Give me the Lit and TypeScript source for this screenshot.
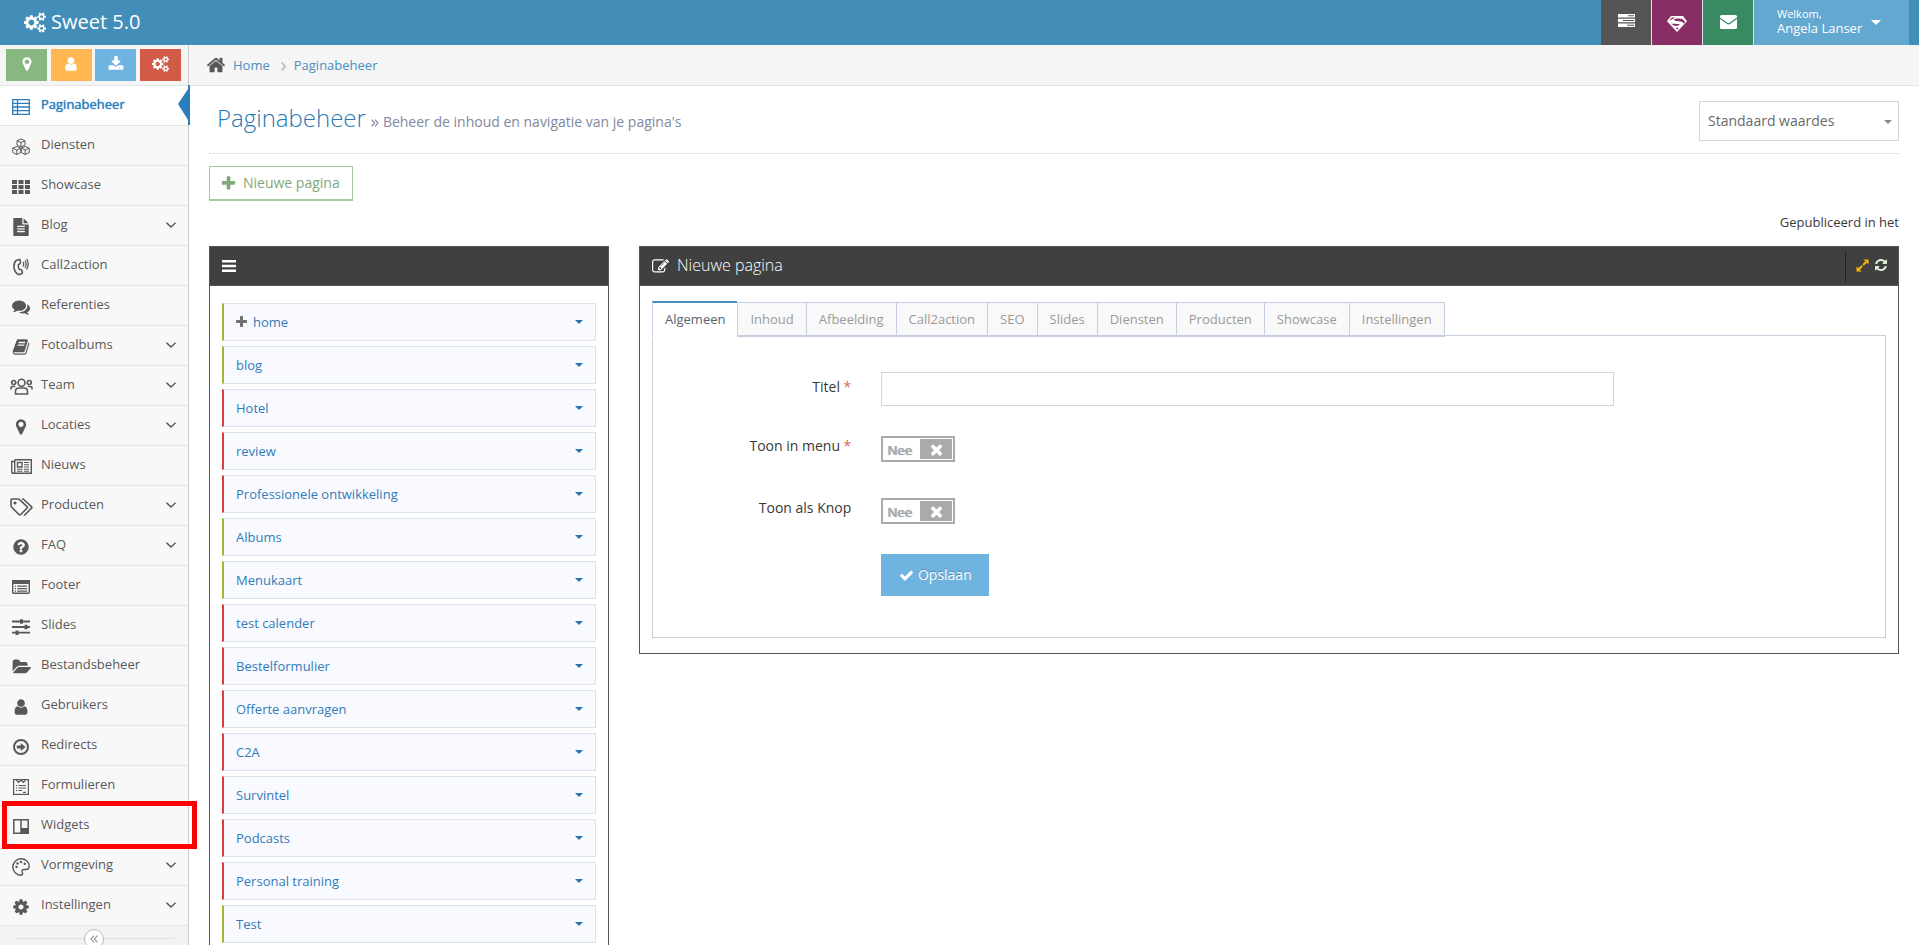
import { LitElement, html, css, svg, nothing, TemplateResult } from "lit";
import { customElement, property } from "lit/decorators.js";
import { classMap } from "lit/directives/class-map.js";

type Icon = { box: string; w: number; h: number; body: TemplateResult };

const glyph = (d: string, size = 18, box = "0 0 1792 1792", w = size): Icon => ({
  box,
  w,
  h: size,
  body: svg`<path fill="currentColor" d=${d}></path>`,
});
const art = (w: number, h: number, body: TemplateResult): Icon => ({ box: `0 0 ${w} ${h}`, w, h, body });

const MARKER = "M1152 640q0-106-75-181t-181-75-181 75-75 181 75 181 181 75 181-75 75-181zm256 0q0 109-33 179l-364 774q-16 33-47.5 52t-67.5 19-67.5-19-46.5-52l-365-774q-33-70-33-179 0-212 150-362t362-150 362 150 150 362z";
const USER = "M1536 1399q0 109-62.5 187t-150.5 78h-854q-88 0-150.5-78t-62.5-187q0-85 8.5-160.5t31.5-152 58.5-131 94-89 134.5-34.5q131 128 313 128t313-128q76 0 134.5 34.5t94 89 58.5 131 31.5 152 8.5 160.5zm-256-887q0 159-112.5 271.5t-271.5 112.5-271.5-112.5-112.5-271.5 112.5-271.5 271.5-112.5 271.5 112.5 112.5 271.5z";
const DOWNLOAD = "M1344 1344q0-26-19-45t-45-19-45 19-19 45 19 45 45 19 45-19 19-45zm256 0q0-26-19-45t-45-19-45 19-19 45 19 45 45 19 45-19 19-45zm128-224v320q0 40-28 68t-68 28h-1472q-40 0-68-28t-28-68v-320q0-40 28-68t68-28h465l135 136q58 56 136 56t136-56l136-136h464q40 0 68 28t28 68zm-325-569q17 41-14 70l-448 448q-18 19-45 19t-45-19l-448-448q-31-29-14-70 17-39 59-39h256v-448q0-26 19-45t45-19h256q26 0 45 19t19 45v448h256q42 0 59 39z";
const COG = "M1152 896q0-106-75-181t-181-75-181 75-75 181 75 181 181 75 181-75 75-181zm512-109v222q0 12-8 23t-20 13l-185 28q-19 54-39 91 35 50 107 138 10 12 10 25t-9 23q-27 37-99 108t-94 71q-12 0-26-9l-138-108q-44 23-91 38-16 136-29 186-7 28-36 28h-222q-14 0-24.5-8.5t-11.5-21.5l-28-184q-49-16-90-37l-141 107q-10 9-25 9-14 0-25-11-126-114-165-168-7-10-7-23 0-12 8-23 15-21 51-66.5t54-70.5q-27-50-41-99l-183-27q-13-2-21-12.5t-8-23.5v-222q0-12 8-23t19-13l186-28q14-46 39-92-40-57-107-138-10-12-10-24 0-10 9-23 26-36 98.5-107.5t94.5-71.5q13 0 26 10l138 107q44-23 91-38 16-136 29-186 7-28 36-28h222q14 0 24.5 8.5t11.5 21.5l28 184q49 16 90 37l142-107q9-9 24-9 13 0 25 10 129 119 165 170 7 8 7 22 0 12-8 23-15 21-51 66.5t-54 70.5q26 50 41 98l183 28q13 2 21 12.5t8 23.5z";
const COGS = "M832 896q0-106-75-181t-181-75-181 75-75 181 75 181 181 75 181-75 75-181zm768 512q0-52-38-90t-90-38-90 38-38 90q0 53 37.5 90.5t90.5 37.5 90.5-37.5 37.5-90.5zm0-1024q0-52-38-90t-90-38-90 38-38 90q0 53 37.5 90.5t90.5 37.5 90.5-37.5 37.5-90.5zm-384 421v185q0 10-7 19.5t-16 10.5l-155 24q-11 35-32 76 34 48 90 115 7 11 7 20 0 12-7 19-23 30-82.5 89.5t-78.5 59.5q-11 0-21-7l-115-90q-37 19-77 31-11 108-23 155-7 24-30 24h-186q-11 0-20-7.5t-10-17.5l-23-153q-34-10-75-31l-118 89q-7 7-20 7-11 0-21-8-144-133-144-160 0-9 7-19 10-14 41-53t47-61q-23-44-35-82l-152-24q-10-1-17-9.5t-7-19.5v-185q0-10 7-19.5t16-10.5l155-24q11-35 32-76-34-48-90-115-7-11-7-20 0-12 7-20 22-30 82-89t79-59q11 0 21 7l115 90q34-18 77-32 11-108 23-154 7-24 30-24h186q11 0 20 7.5t10 17.5l23 153q34 10 75 31l118-89q8-7 20-7 11 0 21 8 144 133 144 160 0 8-7 19-12 16-42 54t-45 60q23 48 34 82l152 23q10 2 17 10.5t7 19.5zm640 533v140q0 16-149 31-12 27-30 52 51 113 51 138 0 4-4 7-122 71-124 71-8 0-46-47t-52-68q-20 2-30 2t-30-2q-14 21-52 68t-46 47q-2 0-124-71-4-3-4-7 0-25 51-138-18-25-30-52-149-15-149-31v-140q0-16 149-31 13-29 30-52-51-113-51-138 0-4 4-7 4-2 35-20t59-34 30-16q8 0 46 46.5t52 67.5q20-2 30-2t30 2q51-71 92-112l6-2q4 0 124 70 4 3 4 7 0 25-51 138 17 23 30 52 149 15 149 31zm0-1024v140q0 16-149 31-12 27-30 52 51 113 51 138 0 4-4 7-122 71-124 71-8 0-46-47t-52-68q-20 2-30 2t-30-2q-14 21-52 68t-46 47q-2 0-124-71-4-3-4-7 0-25 51-138-18-25-30-52-149-15-149-31v-140q0-16 149-31 13-29 30-52-51-113-51-138 0-4 4-7 4-2 35-20t59-34 30-16q8 0 46 46.5t52 67.5q20-2 30-2t30 2q51-71 92-112l6-2q4 0 124 70 4 3 4 7 0 25-51 138 17 23 30 52 149 15 149 31z";
const PLUS = "M1600 736v192q0 40-28 68t-68 28h-416v416q0 40-28 68t-68 28h-192q-40 0-68-28t-28-68v-416h-416q-40 0-68-28t-28-68v-192q0-40 28-68t68-28h416v-416q0-40 28-68t68-28h192q40 0 68 28t28 68v416h416q40 0 68 28t28 68z";
const FILE = "M1596 476q14 14 28 36h-472v-472q22 14 36 28zm-476 164h544v1056q0 40-28 68t-68 28h-1344q-40 0-68-28t-28-68v-1600q0-40 28-68t68-28h800v544q0 40 28 68t68 28zm160 736v-64q0-14-9-23t-23-9h-704q-14 0-23 9t-9 23v64q0 14 9 23t23 9h704q14 0 23-9t9-23zm0-256v-64q0-14-9-23t-23-9h-704q-14 0-23 9t-9 23v64q0 14 9 23t23 9h704q14 0 23-9t9-23zm0-256v-64q0-14-9-23t-23-9h-704q-14 0-23 9t-9 23v64q0 14 9 23t23 9h704q14 0 23-9t9-23z";
const COMMENTS = "M1408 768q0 139-94 257t-256.5 186.5-353.5 68.5q-86 0-176-16-124 88-278 128-36 9-86 16h-3q-11 0-20.5-8t-11.5-21q-1-3-1-6.5t.5-6.5 2-6l2.5-5 3.5-5.5 4-5 4.5-5 4-4.5q5-6 23-25t26-29.5 22.5-29 25-38.5 20.5-44q-124-72-195-177t-71-224q0-139 94-257t256.5-186.5 353.5-68.5 353.5 68.5 256.5 186.5 94 257zm384 256q0 120-71 224.5t-195 176.5q10 24 20.5 44t25 38.5 22.5 29 26 29.5 23 25q1 1 4 4.5t4.5 5 4 5 3.5 5.5l2.5 5 2 6 .5 6.5-1 6.5q-3 14-13 22t-22 7q-50-7-86-16-154-40-278-128-90 16-176 16-271 0-472-132 58 4 88 4 161 0 309-45t264-129q125-92 192-212t67-254q0-77-23-152 129 71 204 178t75 230z";
const BOOK = "M1703 478q40 57 18 129l-275 906q-19 64-76.5 107.5t-122.5 43.5h-923q-77 0-148.5-53.5t-99.5-131.5q-24-67-2-127 0-4 3-27t4-37q1-8-3-21.5t-3-19.5q2-11 8-21t16.5-23.5 16.5-23.5q23-38 45-91.5t30-91.5q3-10 .5-30t-.5-28q3-11 17-28t17-23q21-36 42-92t25-90q1-9-2.5-32t.5-28q4-13 22-30.5t22-22.5q19-26 42.5-84.5t27.5-96.5q1-8-3-25.5t-2-26.5q2-8 9-18t18-23 17-21q8-12 16.5-30.5t15-35 16-36 19.5-32 26.5-23.5 36-11.5 47.5 5.5l-1 3q38-9 51-9h761q74 0 114 56t18 130l-274 906q-36 119-71.5 153.5t-128.5 34.5h-869q-27 0-38 15-11 16-1 43 24 70 144 70h923q29 0 56-15.5t35-41.5l300-987q7-22 5-57 38 15 59 43zm-1064 2q-4 13 2 22.5t20 9.5h608q13 0 25.5-9.5t16.5-22.5l21-64q4-13-2-22.5t-20-9.5h-608q-13 0-25.5 9.5t-16.5 22.5zm-83 256q-4 13 2 22.5t20 9.5h608q13 0 25.5-9.5t16.5-22.5l21-64q4-13-2-22.5t-20-9.5h-608q-13 0-25.5 9.5t-16.5 22.5z";
const QUESTION = "M1024 1376v-192q0-14-9-23t-23-9h-192q-14 0-23 9t-9 23v192q0 14 9 23t23 9h192q14 0 23-9t9-23zm256-672q0-88-55.5-163t-138.5-116-170-41q-243 0-371 213-15 24 8 42l132 100q7 6 19 6 16 0 25-12 53-68 86-92 34-24 86-24 48 0 85.5 26t37.5 59q0 38-20 61t-68 45q-63 28-115.5 86.5t-52.5 125.5v36q0 14 9 23t23 9h192q14 0 23-9t9-23q0-19 21.5-49.5t54.5-49.5q32-18 49-28.5t46-35 44.5-48 28-60.5 12.5-81zm384 192q0 209-103 385.5t-279.5 279.5-385.5 103-385.5-103-279.5-279.5-103-385.5 103-385.5 279.5-279.5 385.5-103 385.5 103 279.5 279.5 103 385.5z";
const FOLDER = "M1943 952q0 31-31 66l-336 396q-43 51-120.5 86.5t-143.5 35.5h-1088q-34 0-60.5-13t-26.5-43q0-31 31-66l336-396q43-51 120.5-86.5t143.5-35.5h1088q34 0 60.5 13t26.5 43zm-343-344v160h-832q-94 0-197 47.5t-164 119.5l-337 396-5 6q0-4-.5-12.5t-.5-12.5v-960q0-92 66-158t158-66h320q92 0 158 66t66 158v32h544q92 0 158 66t66 158z";
const HOME = "M1472 992v480q0 26-19 45t-45 19h-384v-384h-256v384h-384q-26 0-45-19t-19-45v-480q0-1 .5-3t.5-3l575-474 575 474q1 2 1 6zm223-69l-62 74q-8 9-21 11h-3q-13 0-21-7l-692-577-692 577q-12 8-24 7-13-2-21-11l-62-74q-8-10-7-23.5t11-21.5l719-599q32-26 76-26t76 26l244 204v-195q0-14 9-23t23-9h192q14 0 23 9t9 23v408l219 182q10 8 11 21.5t-7 23.5z";
const CHECK = "M1671 566q0 40-28 68l-724 724-136 136q-28 28-68 28t-68-28l-136-136-362-362q-28-28-28-68t28-68l136-136q28-28 68-28t68 28l294 295 656-657q28-28 68-28t68 28l136 136q28 28 28 68z";
const TIMES = "M1490 1322q0 40-28 68l-136 136q-28 28-68 28t-68-28l-294-294-294 294q-28 28-68 28t-68-28l-136-136q-28-28-28-68t28-68l294-294-294-294q-28-28-28-68t28-68l136-136q28-28 68-28t68 28l294 294 294-294q28-28 68-28t68 28l136 136q28 28 28 68t-28 68l-294 294 294 294q28 28 28 68z";
const REFRESH = "M1639 1056q0 5-1 7-64 268-268 434.5t-478 166.5q-146 0-282.5-55t-243.5-157l-129 129q-19 19-45 19t-45-19-19-45v-448q0-26 19-45t45-19h448q26 0 45 19t19 45-19 45l-137 137q71 66 161 102t187 36q134 0 250-65t186-179q11-17 53-117 8-23 30-23h192q13 0 22.5 9.5t9.5 22.5zm25-800v448q0 26-19 45t-45 19h-448q-26 0-45-19t-19-45 19-45l138-138q-148-137-349-137-134 0-250 65t-186 179q-11 17-53 117-8 23-30 23h-199q-13 0-22.5-9.5t-9.5-22.5v-7q65-268 270-434.5t480-166.5q146 0 284 55.5t245 156.5l130-129q19-19 45-19t45 19 19 45z";
const EDIT = "M888 1184l116-116-152-152-116 116v56h96v96h56zm440-720q-16-16-33 1l-350 350q-17 17-1 33t33-1l350-350q17-17 1-33zm80 594v190q0 119-84.5 203.5t-203.5 84.5h-832q-119 0-203.5-84.5t-84.5-203.5v-832q0-119 84.5-203.5t203.5-84.5h832q63 0 117 25 15 7 18 23 3 17-9 29l-49 49q-14 14-32 8-23-6-45-6h-832q-66 0-113 47t-47 113v832q0 66 47 113t113 47h832q66 0 113-47t47-113v-126q0-13 9-22l64-64q15-15 35-7t20 29zm-96-738l288 288-672 672h-288v-288zm444 132l-92 92-288-288 92-92q28-28 68-28t68 28l152 152q28 28 28 68t-28 68z";

const cube = (x: number, y: number) => svg`<path fill="none" stroke="currentColor" stroke-width="1" stroke-linejoin="round"
  d=${`M${x} ${y + 2}l4-1.7 4 1.7v4.3l-4 2-4-2zM${x} ${y + 2}l4 1.8 4-1.8M${x + 4} ${y + 3.8}v4.5`}></path>`;

const ICONS: Record<string, Icon> = {
  marker: glyph(MARKER),
  markerSmall: glyph(MARKER, 16),
  userSmall: glyph(USER, 16),
  user: glyph(USER),
  download: glyph(DOWNLOAD, 16),
  cog: glyph(COG),
  brand: glyph(COGS, 21, "-64 0 1920 1792", 22),
  cogs: glyph(COGS, 16, "-64 0 1920 1792", 17),
  plus: glyph(PLUS, 17),
  plusSmall: glyph(PLUS, 14, "192 0 1408 1792", 11),
  file: glyph(FILE),
  comments: glyph(COMMENTS),
  book: glyph(BOOK),
  question: glyph(QUESTION),
  folder: glyph(FOLDER, 18, "0 0 1943 1792", 19),
  home: glyph(HOME, 20),
  check: glyph(CHECK, 15),
  times: glyph(TIMES, 17),
  refresh: glyph(REFRESH, 14),
  edit: glyph(EDIT, 17),
  table: art(18, 16, svg`<path fill="none" stroke="currentColor" stroke-width="1.3" d="M.7.7h16.6v14.6H.7zM.7 4.4h16.6M.7 8h16.6M.7 11.7h16.6M5.5.7v14.6"></path>`),
  cubes: art(18, 18, svg`${cube(5, 0.7)}${cube(0.8, 8.2)}${cube(9.2, 8.2)}`),
  grid: art(18, 14, svg`<path fill="currentColor" d="M0 0h5v4H0zM6.500 0h5v4h-5zM13 0h5v4h-5zM0 5h5v4H0zM6.500 5h5v4h-5zM13 5h5v4h-5zM0 10h5v4H0zM6.500 10h5v4h-5zM13 10h5v4h-5z"></path>`),
  phone: art(16, 18, svg`<path fill="none" stroke="currentColor" stroke-width="1.600" stroke-linejoin="round" d="M3.200 2.400 6 1.500c.7-.1 1.100.3 1.200 1l.2 2.200c0 .8-.7 1.300-2 1.700-.5 2-.2 3.600.8 5.100 1.300-.2 2.100 0 2.400.6l.8 1.800c.3.700 0 1.200-.6 1.600l-2.200 1.100C3.900 16.300.9 13 .9 8.700.9 6 1.700 3.700 3.200 2.400z"></path><path fill="none" stroke="currentColor" stroke-width="1.300" d="M10 4q1.500 1.800 0 4.500M12 2.500q2.400 3.500 0 7.500M13.700 1q3 5 0 10.500"></path>`),
  team: art(23, 17, svg`<g fill="none" stroke="currentColor" stroke-width="1.600"><circle cx="11.500" cy="4.700" r="3.500"></circle><path d="M5.500 16V13.500q0-3.500 3.500-3.500h5q3.500 0 3.500 3.500V16z"></path><circle cx="3.700" cy="4.500" r="2"></circle><circle cx="19.300" cy="4.500" r="2"></circle><path d="M1 11.500V10q0-1.500 1.600-1.500h2.700M22 11.500V10q0-1.500-1.600-1.500h-2.700"></path></g>`),
  news: art(21, 15, svg`<path fill="none" stroke="currentColor" stroke-width="1.400" d="M3.700.7h16.600v13.600H2.200Q.7 14.300.7 12.800V2.500h3M3.700.7v12q0 1.600-1.500 1.600"></path><path fill="none" stroke="currentColor" stroke-width="1.400" d="M6.500 3.500h4.500v4.500h-4.500z"></path><path stroke="currentColor" stroke-width="1.100" d="M13 3.500h5M13 5.700h5M13 8h5M6 10.200h5.500M13 10.200h5M6 12.200h5.500M13 12.200h5"></path>`),
  tags: art(23, 18, svg`<g fill="none" stroke="currentColor" stroke-width="1.600" stroke-linejoin="round"><path d="M1 1.800Q1 1 1.800 1H8q1 0 1.800.8L17 8.600q.8.800 0 1.600L10.700 16.500q-.9.900-1.800 0L1.800 9.300Q1 8.500 1 7.500z"></path><path d="M12 1h1.200L21.500 8.700q.7.700 0 1.400L15 16.800q-.6.500-1.200.1"></path></g><circle cx="5" cy="5" r="1.600" fill="currentColor"></circle>`),
  list: art(18, 14, svg`<rect x=".7" y=".7" width="16.600" height="12.600" rx="1" fill="none" stroke="currentColor" stroke-width="1.400"></rect><path fill="currentColor" d="M0 0h18v4H0z"></path><path stroke="currentColor" stroke-width="1.200" d="M2.800 6.200H4M5.200 6.200h10M2.800 8.700H4M5.200 8.700h10M2.800 11.200H4M5.200 11.200h10"></path>`),
  sliders: art(18, 16, svg`<path stroke="currentColor" stroke-width="1.800" d="M0 2.500h18M0 8h18M0 13.700h18"></path><path fill="currentColor" d="M8 .3h3v4.500H8zM12.500 5.800h3v4.500h-3zM3.500 11.500h3V16h-3z"></path>`),
  arrow: art(16, 16, svg`<circle cx="8" cy="8" r="7" fill="none" stroke="currentColor" stroke-width="2"></circle><path fill="currentColor" d="M3.800 6.600h4V3.900L12.600 8l-4.800 4.100V9.400h-4z"></path>`),
  form: art(16, 16, svg`<rect x=".6" y=".6" width="14.800" height="14.800" fill="none" stroke="currentColor" stroke-width="1.200"></rect><path fill="none" stroke="currentColor" stroke-width="1.200" d="M3.500 1l2 2.300L8 1.300l2.500 2 2-2.300M3 6.500h1.300M5.500 6.500H13M3 9h1.300M5.500 9H13M3 11.500h1.300M5.500 11.500H9M10 13.300h3"></path>`),
  widgets: art(16, 15, svg`<path fill="none" stroke="currentColor" stroke-width="1.500" d="M.8.8h14.400v13.400H.8zM8 .8v13.400"></path><path fill="currentColor" d="M8 9h8v6H8z"></path>`),
  palette: art(18, 18, svg`<path fill="none" stroke="currentColor" stroke-width="1.400" d="M9 .8C13.600.8 17.200 4.200 17.200 8c0 2.300-1.400 3.500-3.300 3.500h-2.200c-1.500 0-2.200 1.300-1.500 2.500.6 1.100.7 3.200-1.200 3.200C4.400 17.200.8 13.600.8 9 .8 4.400 4.400.8 9 .8z"></path><g fill="currentColor"><circle cx="4.500" cy="9" r="1.200"></circle><circle cx="5.500" cy="5.500" r="1.200"></circle><circle cx="9" cy="4" r="1.200"></circle><circle cx="12.800" cy="5.800" r="1.200"></circle></g>`),
  tasks: art(17, 13, svg`<path fill="currentColor" d="M0 0h17v3.500H0zM0 4.800h17v3.400H0zM0 9.500h17V13H0z"></path><path fill="#555" d="M10 1.300h6v1h-6zM5 6h11v1H5zM9 10.800h7v1H9z"></path>`),
  hero: art(20, 16, svg`<path fill="currentColor" d="M4 0h12l4 5.300L10 16 0 5.300z"></path><path fill="#892e65" d="M4.800 1.600h3.600L3 4.500 2 5.200zM16 3.400c-2.500-1.400-9-1.300-9 .6 0 1.700 9.800.4 9.800 3.900l1.300-2zM4.300 7.500c3 .6 7.200.2 8.300 1 .6.900-3 1.600-6 1zM8.600 11.700h3.200L10 13.800z"></path>`),
  mail: art(17, 14, svg`<rect width="17" height="14" rx="1.500" fill="currentColor"></rect><path fill="none" stroke="#398a63" stroke-width="1.200" d="M0 3.200l7 5.100q1.500 1.200 3 0l7-5.100"></path>`),
  menu: art(14, 12, svg`<path fill="currentColor" d="M0 0h14v2.500H0zM0 4.800h14v2.400H0zM0 9.500h14V12H0z"></path>`),
  expand: art(13, 13, svg`<path fill="currentColor" d="M7.500.5h5v5l-1.700-1.700-3 3-1.400-1.500 3-3zM5.500 6.300l1.300 1.400-3 3 1.700 1.800h-5v-5l1.800 1.700z"></path>`),
  chevron: art(10, 6, svg`<path fill="none" stroke="currentColor" stroke-width="1.500" d="M.5.700 5 5 9.500.700"></path>`),
  right: art(5, 9, svg`<path fill="none" stroke="currentColor" stroke-width="1.500" d="M.6.600 4.200 4.500.600 8.400"></path>`),
  doubleRight: art(8, 8, svg`<path fill="none" stroke="currentColor" stroke-width="1.200" d="M.6.600 3.600 4 .6 7.400M4 .6 7 4 4 7.400"></path>`),
  doubleLeft: art(8, 8, svg`<path fill="none" stroke="currentColor" stroke-width="1.200" d="M4 .6 1 4l3 3.400M7.400.6l-3 3.400 3 3.400"></path>`),
  caret: art(8, 4, svg`<path fill="currentColor" d="M0 0h8L4 4z"></path>`),
  caretWide: art(10, 5, svg`<path fill="currentColor" d="M0 0h10L5 5z"></path>`),
};

@customElement("ui-icon")
class UiIcon extends LitElement {
  static styles = css`
    :host { display: inline-flex; flex: none; }
    svg { display: block; }
  `;
  @property() name = "";
  render() {
    const i = ICONS[this.name];
    return i
      ? html`<svg viewBox=${i.box} width=${i.w} height=${i.h} aria-hidden="true">${i.body}</svg>`
      : nothing;
  }
}

const NAV: { label: string; icon: string; sub?: boolean; active?: boolean; marked?: boolean }[] = [
  { label: "Paginabeheer", icon: "table", active: true },
  { label: "Diensten", icon: "cubes" },
  { label: "Showcase", icon: "grid" },
  { label: "Blog", icon: "file", sub: true },
  { label: "Call2action", icon: "phone" },
  { label: "Referenties", icon: "comments" },
  { label: "Fotoalbums", icon: "book", sub: true },
  { label: "Team", icon: "team", sub: true },
  { label: "Locaties", icon: "marker", sub: true },
  { label: "Nieuws", icon: "news" },
  { label: "Producten", icon: "tags", sub: true },
  { label: "FAQ", icon: "question", sub: true },
  { label: "Footer", icon: "list" },
  { label: "Slides", icon: "sliders" },
  { label: "Bestandsbeheer", icon: "folder" },
  { label: "Gebruikers", icon: "user" },
  { label: "Redirects", icon: "arrow" },
  { label: "Formulieren", icon: "form" },
  { label: "Widgets", icon: "widgets", marked: true },
  { label: "Vormgeving", icon: "palette", sub: true },
  { label: "Instellingen", icon: "cog", sub: true },
];

const PAGES: { title: string; live?: boolean; children?: boolean }[] = [
  { title: "home", live: true, children: true },
  { title: "blog", live: true },
  { title: "Hotel" },
  { title: "review" },
  { title: "Professionele ontwikkeling" },
  { title: "Albums", live: true },
  { title: "Menukaart", live: true },
  { title: "test calender" },
  { title: "Bestelformulier" },
  { title: "Offerte aanvragen" },
  { title: "C2A" },
  { title: "Survintel" },
  { title: "Podcasts" },
  { title: "Personal training" },
  { title: "Test", live: true },
];

const TABS = ["Algemeen", "Inhoud", "Afbeelding", "Call2action", "SEO", "Slides", "Diensten", "Producten", "Showcase", "Instellingen"];

@customElement("app-root")
class AppRoot extends LitElement {
  static styles = css`
    :host {
      display: flex;
      flex-direction: column;
      height: 100vh;
      overflow: hidden;
      background: #fff;
      color: #393939;
      font: 13px/20px "Open Sans", "Noto Sans", sans-serif;
    }
    * { box-sizing: border-box; }
    a { color: #337ab7; text-decoration: none; }
    ul { list-style: none; margin: 0; padding: 0; }
    button, input, select { font: inherit; border-radius: 0; margin: 0; }
    button { cursor: pointer; }

    .topbar { display: flex; justify-content: space-between; flex: none; height: 45px; padding: 0 10px 0 24px; background: #438eb9; color: #fff; }
    .brand { display: flex; align-items: center; gap: 5px; padding-bottom: 1px; color: #fff; font-size: 20px; }
    .tools { display: flex; gap: 1px; }
    .tools-wrap { display: flex; background: #d9e6ee; }
    .tool { display: flex; align-items: center; justify-content: center; width: 50px; border: 0; padding: 0 0 4px; color: #fff; }
    .grey { background: #555; }
    .purple { background: #892e65; padding: 2px 0 0; }
    .green { background: #398a63; padding: 0 0 2px; }
    .account { display: flex; align-items: center; gap: 9px; width: 155px; border: 0; padding: 0 0 0 23px; background: #62a8d1; color: #fff; text-align: left; }
    .account-name { display: block; padding-bottom: 4px; line-height: 14px; }
    .welcome { display: block; font-size: 11px; }

    .shell { display: flex; flex: 1; min-height: 0; }
    .sidebar { position: relative; z-index: 1; display: flex; flex-direction: column; flex: none; width: 189px; border-right: 1px solid #ccc; background: #f2f2f2; }
    .shortcuts { display: flex; justify-content: space-between; padding: 4px 7px 4px 6px; flex: none; background: #f5f5f5; }
    .shortcut { display: flex; align-items: center; justify-content: center; width: 41px; height: 32px; border: 0; padding: 0 0 2px; color: #fff; }
    .s-green { background: #87b87f; }
    .s-orange { background: #ffb752; }
    .s-blue { background: #6fb3e0; }
    .s-red { background: #d15b47; }
    .nav-item { position: relative; border-top: 1px solid #e5e5e5; }
    .nav-link { display: flex; align-items: center; height: 39px; padding: 0 12px 0 6px; background: #f8f8f8; color: #585858; }
    .nav-icon { display: flex; justify-content: center; width: 30px; padding-top: 2px; }
    .nav-text { flex: 1; padding: 0 0 4px 5px; }
    .nav-arrow { padding-bottom: 1px; }
    .active .nav-link { background: #fff; color: #2b7dbc; }
    .active .nav-text { text-shadow: 0 0 1px #2b7dbc; }
    .active::after { content: ""; position: absolute; inset: -1px -2px 0 auto; width: 12px; background: #2b7dbc; clip-path: polygon(10px 0, 12px 0, 12px 100%, 10px 100%, 10px 35px, 0 19px, 10px 4px); }
    .marked::after { content: ""; position: absolute; inset: -5px -9px -4px 2px; border: 5px solid #f00; z-index: 2; pointer-events: none; }
    .collapse { display: flex; align-items: center; flex: none; height: 26px; padding: 0 14px; border-top: 1px solid #e5e5e5; }
    .collapse::before, .collapse::after { content: ""; flex: 1; border-top: 1px solid #e0e0e0; }
    .collapse-button { display: flex; align-items: center; justify-content: center; width: 20px; height: 20px; padding: 0; border: 1px solid #bbb; border-radius: 50%; background: #fff; color: #999; }

    .main { flex: 1; min-width: 0; }
    .crumbs { display: flex; align-items: center; height: 41px; padding: 0 17px; border-bottom: 1px solid #e5e5e5; background: #f5f5f5; color: #585858; }
    .crumbs a { color: #4c8fbd; }
    .crumbs .first { padding: 0 11px 0 7px; }
    .crumbs .last { padding-left: 8px; }
    .sep { color: #b2b6bf; padding-top: 2px; }
    .content { padding: 15px 20px; }
    .page-header { display: flex; align-items: center; justify-content: space-between; padding: 0 0 12px 8px; border-bottom: 1px dotted #ccc; }
    .heading { display: flex; align-items: baseline; gap: 5px; margin: 0; padding-bottom: 2px; color: #2679b5; font-size: 24px; line-height: 32px; font-weight: 300; }
    .subtitle { display: inline-flex; align-items: baseline; gap: 4px; color: #8089a0; font-size: 14px; font-weight: 400; }
    .picker { position: relative; width: 200px; }
    .picker select { appearance: none; width: 100%; height: 40px; padding: 0 24px 0 8px; border: 1px solid #d5d5d5; background: #fff; color: #696969; font-size: 14px; }
    .picker-caret { position: absolute; right: 7px; top: 19px; color: #888; pointer-events: none; }
    .new-page { display: flex; align-items: center; gap: 6px; margin-top: 12px; height: 35px; padding: 0 12px 0 10px; border: 1px solid #a7c9a1; border-bottom-width: 2px; background: #fff; color: #81a87b; font-size: 14px; }
    .published { margin: 11px 0 14px; text-align: right; }

    .columns { display: flex; align-items: flex-start; gap: 30px; }
    .pages { flex: none; width: calc((100% + 30px) / 4 - 30px); }
    .editor { flex: 1; min-width: 0; }
    .widget { border: 1px solid #555; background: #fff; }
    .widget-head { display: flex; align-items: center; height: 39px; padding-left: 12px; border-bottom: 1px solid #555; background: #404040; color: #fff; }
    .widget-title { flex: 1; margin: 0; padding: 0 0 3px 8px; font-size: 16px; font-weight: 300; }
    .widget-tools { display: flex; align-items: center; gap: 5px; height: 31px; padding: 0 10px; border-left: 1px solid #222; }
    .widget-tool { display: flex; padding: 0 0 2px; border: 0; background: none; }
    .amber { color: #ffb400; }
    .mint { color: #def0d8; }
    .page-list { display: flex; flex-direction: column; gap: 5px; padding: 17px 12px; }
    .page-item { display: flex; align-items: center; justify-content: space-between; height: 38px; padding: 0 12px; border: 1px solid #dae2ea; border-left: 2px solid #d53f40; background: #f8faff; color: #337ab7; }
    .page-item.live { border-left-color: #9abc32; }
    .page-name { display: flex; align-items: center; gap: 6px; margin: 0; color: #707070; }
    .page-menu { display: flex; padding: 0; border: 0; background: none; color: #2c74b4; }

    .editor-body { padding: 15px 12px; }
    .tabs { position: relative; display: flex; align-items: flex-end; margin-bottom: -2px; }
    .tab { height: 35px; padding: 0 12px; border: 1px solid #c5cfe0; border-width: 1px 0 2px 1px; background: #f9f9f9; color: #999; }
    .tab:last-child { border-right-width: 1px; }
    .tab.on { height: 36px; border-top: 2px solid #4c8fbd; border-bottom-color: #fff; background: #fff; color: #576373; }
    .pane { padding: 36px 12px 41px; border: 1px solid #c5d0dc; }
    .row { display: flex; align-items: flex-start; }
    .row-label { flex: none; width: 16.6667%; padding: 0 15px 0 0; text-align: right; font-size: 14px; }
    .tall .row-label { padding-top: 5px; }
    .req { color: #dd6a57; }
    .row-field { flex: 1; padding: 0 15px; }
    .tall { min-height: 64px; }
    .mid { min-height: 62px; }
    .short { min-height: 56px; }
    .text { display: block; width: 75%; height: 34px; padding: 0 8px; border: 1px solid #d5d5d5; }
    .toggle { position: relative; display: flex; justify-content: space-between; width: 74px; height: 26px; padding: 1px 1px 1px 4px; border: 2px solid #aaa; background: #fff; color: #aaa; line-height: 22px; cursor: pointer; }
    .toggle-text { text-shadow: 1px 0 0 #aaa, 0 0 1px #aaa; }
    .toggle input { position: absolute; inset: 0; width: 100%; height: 100%; opacity: 0; }
    .knob { display: flex; align-items: center; justify-content: center; width: 32px; background: #aaa; color: #fff; }
    .save { display: flex; align-items: center; justify-content: center; gap: 4px; width: 108px; height: 42px; padding: 0; border: 0; background: #6fb3e0; color: #fff; font-size: 14px; text-shadow: 0 -1px 0 rgba(0, 0, 0, 0.25); }
  `;

  private toggleRow(id: string, label: string, required: boolean, size: string) {
    return html`<div class="row ${size}">
      <label class="row-label" for=${id}>${label}${required ? html` <span class="req">*</span>` : nothing}</label>
      <div class="row-field">
        <div class="toggle">
          <span class="toggle-text">Nee</span><span class="knob"><ui-icon name="times"></ui-icon></span>
          <input type="checkbox" id=${id} />
        </div>
      </div>
    </div>`;
  }

  render() {
    return html`
      <header class="topbar">
        <a class="brand" href="#"><ui-icon name="brand"></ui-icon><span>Sweet 5.0</span></a>
        <div class="tools-wrap"><div class="tools">
          <button class="tool grey" aria-label="Taken"><ui-icon name="tasks"></ui-icon></button>
          <button class="tool purple" aria-label="Beheer"><ui-icon name="hero"></ui-icon></button>
          <button class="tool green" aria-label="Berichten"><ui-icon name="mail"></ui-icon></button>
          <button class="account">
            <span class="account-name"><span class="welcome">Welkom,</span>Angela Lanser</span>
            <ui-icon name="caretWide"></ui-icon>
          </button>
        </div></div>
      </header>
      <div class="shell">
        <aside class="sidebar">
          <div class="shortcuts">
            <button class="shortcut s-green" aria-label="Locaties"><ui-icon name="markerSmall"></ui-icon></button>
            <button class="shortcut s-orange" aria-label="Gebruikers"><ui-icon name="userSmall"></ui-icon></button>
            <button class="shortcut s-blue" aria-label="Downloads"><ui-icon name="download"></ui-icon></button>
            <button class="shortcut s-red" aria-label="Instellingen"><ui-icon name="cogs"></ui-icon></button>
          </div>
          <nav><ul>
            ${NAV.map((n) => html`<li class=${classMap({ "nav-item": true, active: !!n.active, marked: !!n.marked })}>
              <a class="nav-link" href="#">
                <span class="nav-icon"><ui-icon name=${n.icon}></ui-icon></span>
                <span class="nav-text">${n.label}</span>
                ${n.sub ? html`<ui-icon class="nav-arrow" name="chevron"></ui-icon>` : nothing}
              </a>
            </li>`)}
          </ul></nav>
          <div class="collapse"><button class="collapse-button" aria-label="Menu inklappen"><ui-icon name="doubleLeft"></ui-icon></button></div>
        </aside>
        <main class="main">
          <nav class="crumbs">
            <ui-icon name="home"></ui-icon>
            <a class="first" href="#">Home</a>
            <ui-icon class="sep" name="right"></ui-icon>
            <a class="last" href="#">Paginabeheer</a>
          </nav>
          <div class="content">
            <div class="page-header">
              <h1 class="heading">Paginabeheer
                <span class="subtitle"><ui-icon name="doubleRight"></ui-icon>Beheer de inhoud en navigatie van je pagina's</span>
              </h1>
              <div class="picker">
                <select aria-label="Waardes"><option>Standaard waardes</option></select>
                <ui-icon class="picker-caret" name="caret"></ui-icon>
              </div>
            </div>
            <button class="new-page"><ui-icon name="plus"></ui-icon>Nieuwe pagina</button>
            <p class="published">Gepubliceerd in het</p>
            <div class="columns">
              <section class="widget pages">
                <div class="widget-head"><ui-icon name="menu"></ui-icon></div>
                <ul class="page-list">
                  ${PAGES.map((p) => html`<li class=${classMap({ "page-item": true, live: !!p.live })}>
                    <span class="page-name">${p.children ? html`<ui-icon name="plusSmall"></ui-icon>` : nothing}<a href="#">${p.title}</a></span>
                    <button class="page-menu" aria-label=${"Opties " + p.title}><ui-icon name="caret"></ui-icon></button>
                  </li>`)}
                </ul>
              </section>
              <section class="widget editor">
                <div class="widget-head">
                  <ui-icon name="edit"></ui-icon>
                  <h2 class="widget-title">Nieuwe pagina</h2>
                  <div class="widget-tools">
                    <button class="widget-tool amber" aria-label="Volledig scherm"><ui-icon name="expand"></ui-icon></button>
                    <button class="widget-tool mint" aria-label="Vernieuwen"><ui-icon name="refresh"></ui-icon></button>
                  </div>
                </div>
                <div class="editor-body">
                  <div class="tabs" role="tablist">
                    ${TABS.map((t, i) => html`<button role="tab" class=${classMap({ tab: true, on: i === 0 })}>${t}</button>`)}
                  </div>
                  <form class="pane">
                    <div class="row tall">
                      <label class="row-label" for="titel">Titel <span class="req">*</span></label>
                      <div class="row-field"><input class="text" id="titel" type="text" /></div>
                    </div>
                    ${this.toggleRow("menu", "Toon in menu", true, "mid")}
                    ${this.toggleRow("knop", "Toon als Knop", false, "short")}
                    <div class="row">
                      <span class="row-label"></span>
                      <div class="row-field"><button class="save" type="button"><ui-icon name="check"></ui-icon>Opslaan</button></div>
                    </div>
                  </form>
                </div>
              </section>
            </div>
          </div>
        </main>
      </div>
    `;
  }
}
